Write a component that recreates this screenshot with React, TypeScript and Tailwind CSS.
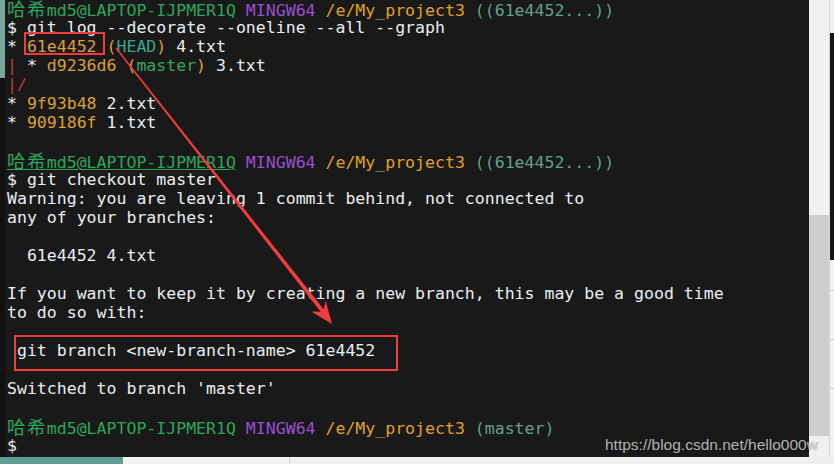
const WHITE = "text-[#eaeef2]"
const HASH = "text-[#dca030]"
const RED = "text-[#c63b3b]"

type Seg = [string, string]

const Wide = ({ children }: { children: string }) => (
  <span className="font-['Noto_Sans_CJK_SC',sans-serif] text-[18.5px] leading-[19px] tracking-[1.4px]">
    {children}
  </span>
)

const Prompt = ({ branch, underline }: { branch: string; underline?: boolean }) => (
  <div className="h-[19px] whitespace-pre">
    <span
      className={
        underline
          ? "text-[#2aa65c] underline decoration-1 underline-offset-[1px]"
          : "text-[#2aa65c]"
      }
    >
      <Wide>哈希</Wide>
      {"md5@LAPTOP-IJPMER1Q"}
    </span>
    <span className="text-[#9a4ed2]">{" MINGW64"}</span>
    <span className="text-[#e2a21e]">{" /e/My_project3"}</span>
    <span className="text-[#62a08c]">{" " + branch}</span>
  </div>
)

const Line = ({ segs }: { segs: Seg[] }) => (
  <div className="h-[19px] whitespace-pre">
    {segs.map(([t, c], i) => (
      <span key={i} className={c}>
        {t}
      </span>
    ))}
  </div>
)

const Text = ({ children }: { children?: string }) => (
  <div className={`h-[19px] whitespace-pre ${WHITE}`}>{children}</div>
)

const Terminal = () => (
  <div className="flex-1 bg-[#191919] pl-[2px] pt-[0px] font-['DejaVu_Sans_Mono',monospace] text-[16.55px] leading-[19px] overflow-hidden">
    <div className="-mt-[1.5px]">
      <Prompt branch="((61e4452...))" />
      <Text>$ git log --decorate --oneline --all --graph</Text>
      <Line
        segs={[
          ["* ", WHITE],
          ["61e4452 (", HASH],
          ["HEAD", "text-[#36a68c]"],
          [")", HASH],
          [" 4.txt", WHITE],
        ]}
      />
      <Line
        segs={[
          ["|", RED],
          [" * ", WHITE],
          ["d9236d6 (", HASH],
          ["master", "text-[#3ba354]"],
          [")", HASH],
          [" 3.txt", WHITE],
        ]}
      />
      <Line segs={[["|/", RED]]} />
      <Line segs={[["* ", WHITE], ["9f93b48", HASH], [" 2.txt", WHITE]]} />
      <Line segs={[["* ", WHITE], ["909186f", HASH], [" 1.txt", WHITE]]} />
      <Text />
      <Prompt branch="((61e4452...))" underline />
      <Text>$ git checkout master</Text>
      <Text>Warning: you are leaving 1 commit behind, not connected to</Text>
      <Text>any of your branches:</Text>
      <Text />
      <Text>{"  61e4452 4.txt"}</Text>
      <Text />
      <Text>If you want to keep it by creating a new branch, this may be a good time</Text>
      <Text>to do so with:</Text>
      <Text />
      <Text>{" git branch <new-branch-name> 61e4452"}</Text>
      <Text />
      <Text>Switched to branch 'master'</Text>
      <Text />
      <Prompt branch="(master)" />
      <Text>$</Text>
    </div>
  </div>
)

const Annotations = () => (
  <svg
    className="absolute inset-0 pointer-events-none"
    width="834"
    height="464"
    viewBox="0 0 834 464"
  >
    <rect x="25" y="33" width="79" height="21" fill="none" stroke="#f03c3c" strokeWidth="2" />
    <rect x="15" y="336" width="382" height="34" fill="none" stroke="#f03c3c" strokeWidth="2" />
    <polygon
      fill="#f03c3c"
      points="115.5,48.4 320.6,311.7 311.1,311.6 332,324 325.7,300.8 323.7,309.2 116.5,47.6"
    />
  </svg>
)

export default function App() {
  return (
    <div className="relative w-[834px] h-[464px] overflow-hidden bg-[#ededed] flex flex-col">
      <div className="flex h-[457px]">
        <div className="w-[5px] flex flex-col">
          <div className="h-[78px] bg-[#7aa69e]" />
          <div className="flex-1 bg-[#101010]" />
        </div>
        <Terminal />
        <div className="w-[20px] bg-[#f0f0f0] flex flex-col">
          <div className="h-[215px]" />
          <div className="h-[221px] bg-[#cdcdcd]" />
        </div>
        <div className="w-[5px] flex flex-col border-l border-[#d6d6d6]">
          <div className="h-[33px] bg-[#f0f0f0]" />
          <div className="h-[227px] bg-[#151515]" />
          <div className="flex-1 bg-[#f3f3f3] flex flex-col gap-[48px] pt-[30px]">
            <div className="h-px bg-[#cfcfcf]" />
            <div className="h-px bg-[#cfcfcf]" />
            <div className="h-px bg-[#cfcfcf]" />
          </div>
        </div>
      </div>
      <div className="flex flex-1">
        <div className="w-[123px] bg-[#5f9d92]" />
        <div className="w-[167px] bg-[#f4f4f4] border-r border-[#d0d0d0]" />
        <div className="flex-1 bg-[#efefef]" />
      </div>
      <Annotations />
      <div className="absolute left-[605px] top-[437px] font-['Liberation_Sans',Arial,sans-serif] text-[15.5px] leading-none text-white/70 [text-shadow:0_0_1px_rgba(0,0,0,0.6)] whitespace-nowrap">
        https://blog.csdn.net/hello000w
      </div>
    </div>
  )
}
